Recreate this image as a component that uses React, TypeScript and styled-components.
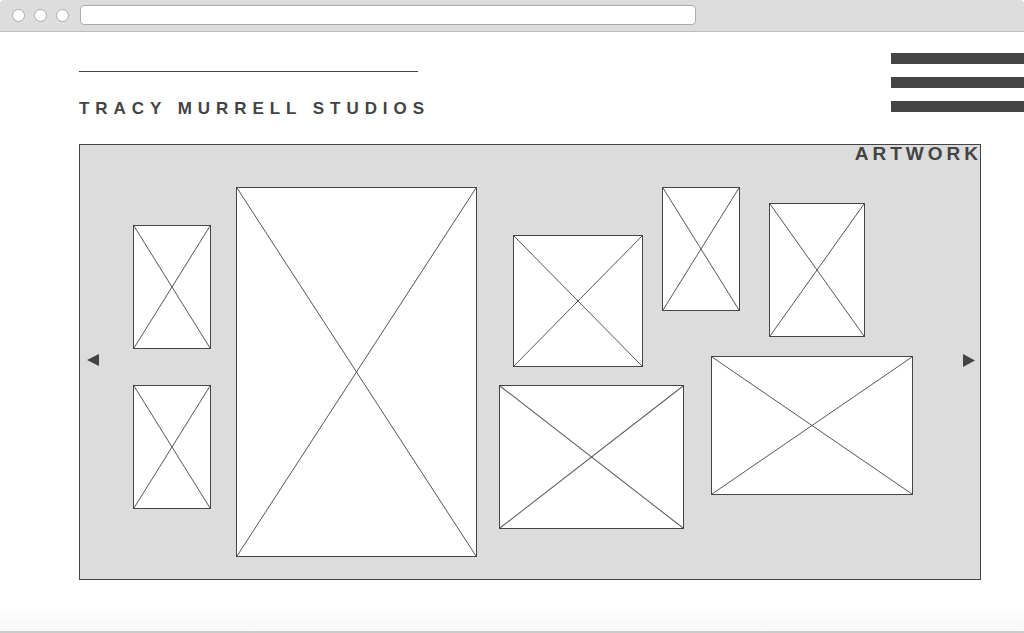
import styled, { createGlobalStyle } from "styled-components";

const GlobalStyle = createGlobalStyle`
  html, body {
    margin: 0;
    padding: 0;
    background: #ffffff;
    font-family: "Liberation Sans", Arial, sans-serif;
  }
  * { box-sizing: border-box; }
`;

const Window = styled.div`
  width: 1024px;
  height: 633px;
  display: flex;
  flex-direction: column;
  overflow: hidden;
  background: #ffffff;
`;

const Chrome = styled.div`
  height: 32px;
  flex-shrink: 0;
  background: #dddddd;
  border-bottom: 1px solid #bdbdbd;
  border-radius: 4px 4px 0 0;
  display: flex;
  align-items: center;
  padding: 0 0 1px 12px;
`;

const Dot = styled.span`
  width: 13px;
  height: 13px;
  border-radius: 50%;
  background: #ffffff;
  border: 1px solid #aaaaaa;
  margin-right: 9px;
`;

const UrlBar = styled.div`
  width: 616px;
  height: 20px;
  margin-left: 2px;
  background: #ffffff;
  border: 1px solid #aaaaaa;
  border-radius: 4px;
`;

const Content = styled.div`
  flex: 1;
  display: flex;
  flex-direction: column;
  padding-left: 79px;
`;

const Header = styled.header`
  display: flex;
  justify-content: space-between;
  align-items: flex-start;
`;

const Brand = styled.div`
  margin-top: 39px;
  display: flex;
  flex-direction: column;
`;

const Rule = styled.div`
  width: 339px;
  height: 1px;
  background: #444444;
`;

const Title = styled.h1`
  margin: 27px 0 0;
  font-size: 17px;
  line-height: 20px;
  font-weight: 700;
  letter-spacing: 5.95px;
  color: #444444;
  white-space: nowrap;
`;

const Menu = styled.div`
  margin-top: 21px;
  width: 133px;
  display: flex;
  flex-direction: column;
  gap: 13px;
`;

const MenuBar = styled.span`
  height: 11px;
  background: #444444;
`;

const Panel = styled.section`
  position: relative;
  margin-top: 25px;
  width: 902px;
  height: 436px;
  background: #dcdcdc;
  border: 1px solid #444444;
  padding: 42px 0 0 53px;
`;

const PanelLabel = styled.div`
  position: absolute;
  top: -1px;
  right: -2px;
  font-size: 19px;
  line-height: 19px;
  font-weight: 700;
  letter-spacing: 4px;
  color: #444444;
`;

const Arrow = styled.svg<{ $side: "left" | "right" }>`
  position: absolute;
  top: 209px;
  ${(p) => (p.$side === "left" ? "left: 7px;" : "right: 5px;")}
  width: 12px;
  height: 13px;
  display: block;
`;

const Gallery = styled.div`
  display: flex;
  align-items: flex-start;
`;

const Column = styled.div<{ $gap: number; $ml?: number; $mt?: number; $w?: number }>`
  display: flex;
  flex-direction: column;
  align-items: flex-start;
  gap: ${(p) => p.$gap}px;
  margin-left: ${(p) => p.$ml ?? 0}px;
  margin-top: ${(p) => p.$mt ?? 0}px;
  ${(p) => (p.$w ? `width: ${p.$w}px;` : "")}
  flex-shrink: 0;
`;

const Row = styled.div<{ $gap: number }>`
  display: flex;
  align-items: flex-start;
  gap: ${(p) => p.$gap}px;
`;

const Frame = styled.div<{ $w: number; $h: number; $ml?: number; $mt?: number }>`
  width: ${(p) => p.$w}px;
  height: ${(p) => p.$h}px;
  margin-left: ${(p) => p.$ml ?? 0}px;
  margin-top: ${(p) => p.$mt ?? 0}px;
  flex-shrink: 0;
  background: #ffffff;
  border: 1px solid #444444;
`;

const CrossSvg = styled.svg`
  display: block;
  width: 100%;
  height: 100%;
`;

const Footer = styled.div`
  height: 28px;
  flex-shrink: 0;
  background: linear-gradient(#ffffff, #f7f7f7);
  border-bottom: 2px solid #cccccc;
`;

type PicProps = { w: number; h: number; ml?: number; mt?: number };

const Placeholder = ({ w, h, ml, mt }: PicProps) => (
  <Frame $w={w} $h={h} $ml={ml} $mt={mt}>
    <CrossSvg viewBox="0 0 100 100" preserveAspectRatio="none">
      <line x1="0" y1="0" x2="100" y2="100" stroke="#555" strokeWidth="1" vectorEffect="non-scaling-stroke" />
      <line x1="100" y1="0" x2="0" y2="100" stroke="#555" strokeWidth="1" vectorEffect="non-scaling-stroke" />
    </CrossSvg>
  </Frame>
);

export default function App() {
  return (
    <>
      <GlobalStyle />
      <Window>
        <Chrome>
          <Dot />
          <Dot />
          <Dot />
          <UrlBar />
        </Chrome>
        <Content>
          <Header>
            <Brand>
              <Rule />
              <Title>TRACY MURRELL STUDIOS</Title>
            </Brand>
            <Menu>
              <MenuBar />
              <MenuBar />
              <MenuBar />
            </Menu>
          </Header>
          <Panel>
            <PanelLabel>ARTWORK</PanelLabel>
            <Arrow $side="left" viewBox="0 0 12 13">
              <polygon points="12,0 12,12 0,6" fill="#444" />
            </Arrow>
            <Arrow $side="right" viewBox="0 0 12 13">
              <polygon points="0,0 12,6.5 0,13" fill="#444" />
            </Arrow>
            <Gallery>
              <Column $gap={36} $mt={38}>
                <Placeholder w={78} h={124} />
                <Placeholder w={78} h={124} />
              </Column>
              <Column $gap={0} $ml={25}>
                <Placeholder w={241} h={370} />
              </Column>
              <Column $gap={18} $ml={22} $mt={48} $w={163}>
                <Placeholder w={130} h={132} ml={14} />
                <Placeholder w={185} h={144} />
              </Column>
              <Column $gap={19}>
                <Row $gap={29}>
                  <Placeholder w={78} h={124} />
                  <Placeholder w={96} h={134} mt={16} />
                </Row>
                <Placeholder w={202} h={139} ml={49} />
              </Column>
            </Gallery>
          </Panel>
        </Content>
        <Footer />
      </Window>
    </>
  );
}
